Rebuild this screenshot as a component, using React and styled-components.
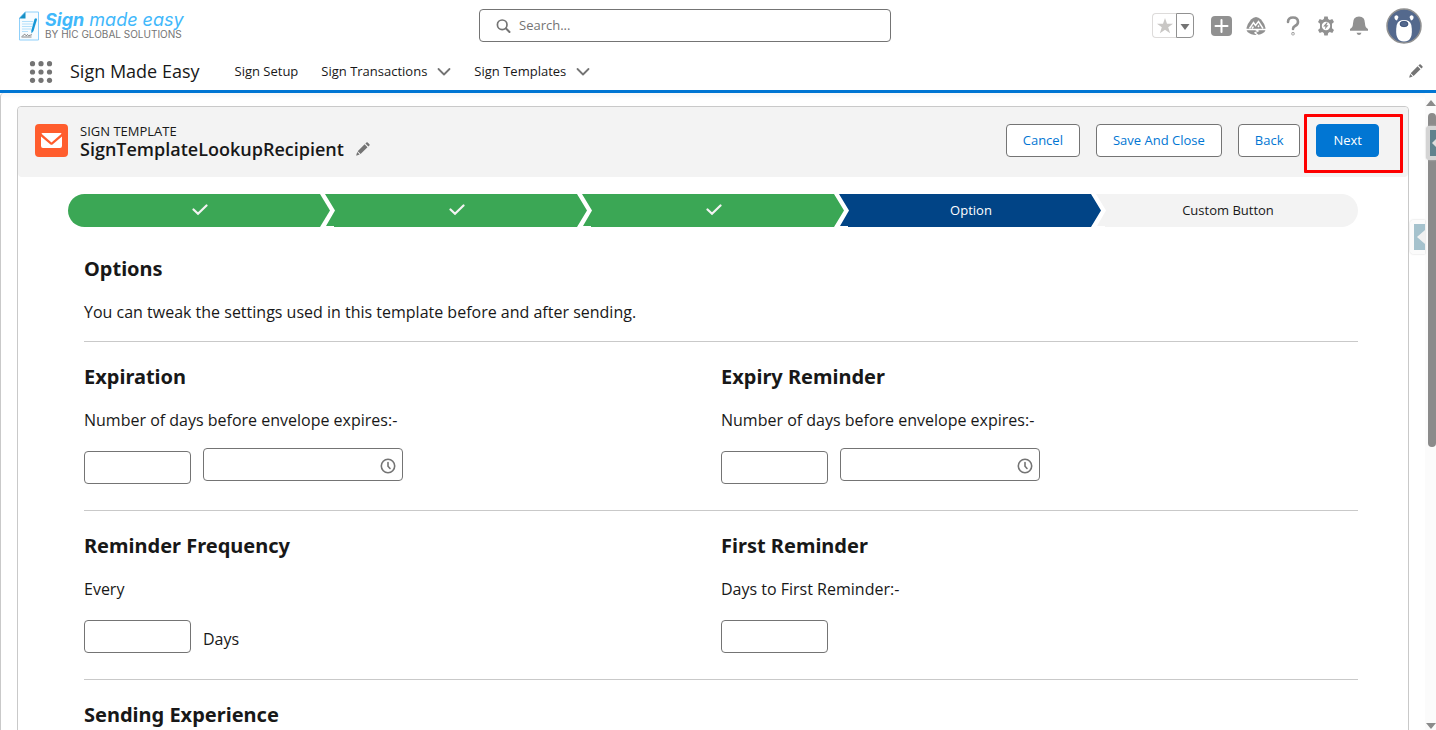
import React from 'react';
import styled, { createGlobalStyle } from 'styled-components';

const GlobalStyle = createGlobalStyle`
  *, *::before, *::after { box-sizing: border-box; }
  body {
    margin: 0;
    overflow: hidden;
    background: #fff;
    color: #181818;
    font-family: 'Open Sans', 'Segoe UI', sans-serif;
    font-size: 13px;
  }
  h1, h2, p { margin: 0; }
  button, input { font: inherit; }
`;

const Shell = styled.div`
  display: flex;
  flex-direction: column;
  height: 100vh;
`;

const GlobalHeader = styled.header`
  flex: none;
  display: grid;
  grid-template-columns: 461fr 412fr 531fr;
  align-items: center;
  height: 51px;
  padding: 0 14px 0 18px;
`;

const Brand = styled.a`
  display: flex;
  align-items: center;
  gap: 5px;
  color: #747474;
  text-decoration: none;
`;

const BrandText = styled.span`
  display: flex;
  flex-direction: column;
  font-family: Inter, sans-serif;
`;

const BrandName = styled.span`
  color: #41b8fb;
  font-size: 18px;
  line-height: 18px;
  font-style: italic;
  b { font-weight: 700; }
`;

const BrandTag = styled.span`
  font-size: 10px;
  line-height: 11px;
`;

const SearchBox = styled.label`
  display: flex;
  align-items: center;
  gap: 8px;
  height: 33px;
  padding: 0 16px;
  border: 1px solid #747474;
  border-radius: 4px;
  color: #747474;
  input {
    flex: 1;
    min-width: 0;
    padding: 0 0 2px;
    border: 0;
    outline: 0;
    background: none;
    line-height: 20px;
  }
  input::placeholder { color: #747474; opacity: 1; }
`;

const Actions = styled.div`
  display: flex;
  align-items: center;
  justify-content: flex-end;
  color: #919191;
`;

const FavoriteGroup = styled.div`
  display: flex;
  margin-right: 16px;
`;

const FavoriteButton = styled.button`
  display: grid;
  place-items: center;
  width: ${(p) => (p.$menu ? 18 : 24)}px;
  height: 25px;
  padding: 0;
  background: #fff;
  border: 1px solid ${(p) => (p.$menu ? '#919191' : '#dddbda')};
  border-right-width: ${(p) => (p.$menu ? 1 : 0)}px;
  border-radius: ${(p) => (p.$menu ? '0 4px 4px 0' : '4px 0 0 4px')};
  color: ${(p) => (p.$menu ? '#919191' : '#c9c7c5')};
`;

const IconButton = styled.button`
  display: grid;
  place-items: center;
  width: ${(p) => p.$width || 22}px;
  height: 20px;
  margin-right: ${(p) => p.$gap || 0}px;
  padding: 0;
  border: 0;
  background: none;
  color: inherit;
`;

const Avatar = styled.button`
  width: 36px;
  height: 36px;
  padding: 0;
  border: 0;
  border-radius: 50%;
  background: none;
  svg { display: block; }
`;

const NavBar = styled.nav`
  flex: none;
  display: flex;
  align-items: center;
  height: 42px;
  padding: 0 12px 0 29px;
  border-bottom: 3px solid #0176d3;
`;

const AppName = styled.span`
  margin: 0 35px 0 17px;
  font-size: 18px;
  line-height: 24px;
`;

const Tab = styled.div`
  display: flex;
  align-items: center;
  gap: 10px;
  margin-right: 23px;
  a {
    color: inherit;
    line-height: 20px;
    text-decoration: none;
  }
`;

const Spacer = styled.span`
  flex: 1;
`;

const Workspace = styled.div`
  position: relative;
  flex: 1;
  min-height: 0;
  display: flex;
  overflow: hidden;
  background: linear-gradient(#f7f7f7, #fff 6px);
  border-left: 1px solid #c9c9c9;
  border-top-left-radius: 4px;
`;

const Content = styled.main`
  flex: 1;
  min-width: 0;
  padding: 13px 16px 0;
`;

const Card = styled.section`
  padding-bottom: 40px;
  border: 1px solid #c9c9c9;
  border-radius: 4px;
`;

const PageHeader = styled.header`
  display: flex;
  align-items: flex-start;
  height: 70px;
  padding: 17px 29px 0 17px;
  background: #f3f3f3;
  border-radius: 4px;
`;

const ObjectIcon = styled.span`
  display: grid;
  place-items: center;
  width: 33px;
  height: 33px;
  margin-right: 12px;
  border-radius: 4px;
  background: #ff5d2d;
`;

const Titles = styled.div`
  p { font-size: 13px; line-height: 14px; }
  h1 { font-size: 18px; line-height: 22px; font-weight: 600; }
`;

const TitleRow = styled.div`
  display: flex;
  align-items: center;
  gap: 8px;
`;

const ButtonRow = styled.div`
  display: flex;
  gap: 16px;
  margin-left: auto;
`;

const Button = styled.button`
  height: 33px;
  padding: 0 16px 2px;
  border: 1px solid ${(p) => (p.$brand ? '#0176d3' : '#747474')};
  border-radius: 4px;
  background: ${(p) => (p.$brand ? '#0176d3' : '#fff')};
  color: ${(p) => (p.$brand ? '#fff' : '#0176d3')};
  line-height: 20px;
  white-space: nowrap;
`;

const Highlighted = styled.span`
  position: relative;
  display: flex;
  &::after {
    content: '';
    position: absolute;
    inset: -10px -24px -16px -12px;
    border: 3px solid #fe0000;
    border-radius: 1px;
    pointer-events: none;
  }
`;

const Path = styled.ol`
  display: flex;
  margin: 17px 50px 0;
  padding: 0;
  list-style: none;
  border-radius: 17px;
  overflow: hidden;
`;

const stepColors = { done: '#3ba755', current: '#014486', next: '#f3f3f3' };

const point = 'calc(100% - 10px) 0, 100% 50%, calc(100% - 10px) 100%';
const notch = '9px 100%, 9px calc(100% - 1px), 1px calc(100% - 1px), 10px 50%';

const Step = styled.li`
  flex: 1;
  display: grid;
  place-items: center;
  height: 33px;
  padding: 0 0 2px 2px;
  background: ${(p) => stepColors[p.$state]};
  color: ${(p) => (p.$state === 'next' ? '#181818' : '#fff')};
  clip-path: polygon(0 0, ${point}, ${notch});
  &:first-child { clip-path: polygon(0 0, ${point}, 0 100%); }
  &:last-child { clip-path: polygon(0 0, 100% 0, 100% 100%, ${notch}); }
  & + & { margin-left: -5px; }
`;

const Body = styled.div`
  margin: 0 50px 0 66px;
`;

const Row = styled.div`
  display: grid;
  grid-template-columns: 1fr 1fr;
  height: ${(p) => p.$height || 169}px;
  border-bottom: 1px solid #c9c9c9;
`;

const Field = styled.div`
  padding-top: ${(p) => p.$top || 20}px;
`;

const Heading = styled.h2`
  font-family: 'Noto Sans', 'Segoe UI', sans-serif;
  font-size: 20px;
  line-height: 30px;
  font-weight: 700;
`;

const Text = styled.p`
  margin-top: 16px;
  font-size: 16px;
  line-height: 24px;
`;

const Inputs = styled.div`
  display: flex;
  align-items: flex-start;
  gap: 12px;
  margin-top: 16px;
  font-size: 16px;
`;

const Unit = styled.span`
  line-height: 44px;
`;

const TextInput = styled.input`
  width: ${(p) => (p.$wide ? 200 : 107)}px;
  height: 33px;
  padding: 0 12px;
  border: 1px solid #747474;
  border-radius: 4px;
  background: #fff;
  margin-top: ${(p) => (p.$wide ? 0 : 3)}px;
`;

const TimeField = styled.label`
  position: relative;
  display: flex;
  svg {
    position: absolute;
    right: 7px;
    top: 10px;
  }
`;

const ScrollTrack = styled.div`
  flex: none;
  display: flex;
  flex-direction: column;
  align-items: center;
  width: 11px;
  padding: 7px 0 0;
  background: #fbfbfb;
`;

const ScrollThumb = styled.span`
  width: 8px;
  height: 53%;
  margin: 6px 0 auto;
  align-self: flex-end;
  border-radius: 4px;
  background: #8b8b8b;
`;

const SideHandle = styled.button`
  position: absolute;
  right: ${(p) => (p.$dark ? 0 : 11)}px;
  top: ${(p) => (p.$dark ? 33 : 127)}px;
  display: grid;
  place-items: center end;
  width: ${(p) => (p.$dark ? 10 : 15)}px;
  height: 34px;
  padding: 0;
  border: 4px solid ${(p) => (p.$dark ? '#d4d4d4' : '#fbfbfb')};
  border-right: 0;
  border-radius: 4px 0 0 4px;
  background: ${(p) => (p.$dark ? '#5f828d' : '#a5c2cd')};
  box-shadow: 0 0 2px #ccc;
`;

const Chevron = () => (
  <svg width="14" height="10" viewBox="0 0 14 10" fill="none" stroke="#747474" strokeWidth="1.800" strokeLinecap="round" strokeLinejoin="round" aria-hidden="true">
    <path d="M1.500 3 7 8.500 12.500 3" />
  </svg>
);

const Pencil = () => (
  <svg width="14" height="14" viewBox="0 0 14 14" fill="#747474" aria-hidden="true">
    <path d="m1.700 9.200 6.900-6.900 2.900 2.900-6.900 6.900zM9.400 1.500l1-1q.7-.6 1.300 0l1.700 1.700q.6.700 0 1.300l-1 1zM1.200 10l2.500 2.600-2.800 1q-.7.200-.6-.6z" />
  </svg>
);

const Launcher = () => (
  <svg width="24" height="22" viewBox="0 0 24 22" fill="#747474" aria-hidden="true">
    {[2.7, 11, 19.3].map((y) => [3.5, 12, 20.5].map((x) => <circle key={`${x}-${y}`} cx={x} cy={y} r="2.600" />))}
  </svg>
);

const Logo = () => (
  <svg width="22" height="30" viewBox="0 0 22 30" aria-hidden="true">
    <path d="M7 1h13.500v28H1.500V7z" fill="#f7fcff" stroke="#8fd0fa" />
    <path d="M1.200 7.500 7.500 1v6.500z" fill="#158fc6" />
    <path d="M4 10.500h11M4 13h11M4 15.500h10M4 18h9M4 20.500h6" stroke="#b4e0fb" />
    <path d="M16.500 8q2-1.500 2.500.5L15.500 20l-2 2.500-.2-3z" fill="#1597d7" />
    <path d="M4 25.500q3-3.500 3.500-1.500t2-.5l1 1.200 3.500-1M3.500 26h10" fill="none" stroke="#6a6a6a" strokeWidth=".8" />
  </svg>
);

const SearchIcon = () => (
  <svg width="15" height="15" viewBox="0 0 15 15" fill="none" stroke="#747474" aria-hidden="true">
    <circle cx="6.200" cy="6.800" r="4.800" strokeWidth="1.700" />
    <path d="m10 10.500 3.500 3.500" strokeWidth="2" strokeLinecap="round" />
  </svg>
);

const Clock = () => (
  <svg width="16" height="16" viewBox="0 0 16 16" fill="none" stroke="#747474" aria-hidden="true">
    <circle cx="8" cy="8" r="6.700" strokeWidth="1.600" />
    <path d="M8 4.500v3.800l2 2.200" strokeWidth="1.600" strokeLinecap="round" />
  </svg>
);

const Check = () => (
  <svg width="16" height="12" viewBox="0 0 16 12" fill="none" stroke="#f3f3f3" strokeWidth="2.200" strokeLinecap="round" aria-label="Completed">
    <path d="m1.500 5.500 4.500 4.300L14.500 1.500" />
  </svg>
);

const Arrow = ({ down }) => (
  <svg width="10" height="7" viewBox="0 0 10 7" fill="#8b8b8b" aria-hidden="true">
    <path d={down ? 'M0 0h10L5 6z' : 'M0 6h10L5 0z'} />
  </svg>
);

const steps = [
  { name: 'Template', state: 'done' },
  { name: 'Recipients', state: 'done' },
  { name: 'Fields', state: 'done' },
  { name: 'Option', state: 'current' },
  { name: 'Custom Button', state: 'next' },
];

function TopBar() {
  return (
    <GlobalHeader>
      <Brand href="#">
        <Logo />
        <BrandText>
          <BrandName><b>Sign</b> made easy</BrandName>
          <BrandTag>BY HIC GLOBAL SOLUTIONS</BrandTag>
        </BrandText>
      </Brand>
      <SearchBox>
        <SearchIcon />
        <input type="search" placeholder="Search..." aria-label="Search" />
      </SearchBox>
      <Actions>
        <FavoriteGroup>
          <FavoriteButton aria-label="Favorite">
            <svg width="16" height="16" viewBox="0 0 16 16" fill="currentColor"><path d="m8 0 2 5.700h6l-4.800 3.600 1.900 6L8 11.700l-5.100 3.600 1.900-6L0 5.700h6z" /></svg>
          </FavoriteButton>
          <FavoriteButton $menu aria-label="Favorites list">
            <svg width="10" height="8" viewBox="0 0 10 8" fill="#747474"><path d="M.5 2h9L5 8z" /></svg>
          </FavoriteButton>
        </FavoriteGroup>
        <IconButton $gap={13} aria-label="Add">
          <svg width="21" height="20" viewBox="0 0 21 20"><rect width="21" height="20" rx="4" fill="currentColor" /><path d="M10.500 4v12M4.500 10h12" stroke="#fff" strokeWidth="2" strokeLinecap="round" /></svg>
        </IconButton>
        <IconButton $gap={15} aria-label="Guidance">
          <svg width="20" height="20" viewBox="0 0 20 20">
            <path d="M10 1q2.500 0 5 2.500 3.500 4 4.500 8.500.5 2.500-1 4-3.500 3-8.500 3T1.500 16q-1.500-1.500-1-4Q1.500 7.500 5 3.500 7.500 1 10 1z" fill="currentColor" />
            <path d="m3.500 12.500 4-6 2 3L12.500 5.500l4.500 7M6 12.500l1.500-2M12 11l1-1.500" fill="none" stroke="#fff" strokeWidth="1.400" />
            <path d="M0 13.500h20M9 13.500l3 1.500-3 1.800 3 2.500" fill="none" stroke="#fff" strokeWidth="1.300" />
          </svg>
        </IconButton>
        <IconButton $gap={11} aria-label="Help">
          <svg width="14" height="20" viewBox="0 0 14 20" fill="none" stroke="currentColor" strokeWidth="2.600" strokeLinecap="round"><path d="M2 6q0-4.500 5-4.500T12 6q0 2.600-3 4-2 1-2 3" /><circle cx="7" cy="17.800" r=".4" /></svg>
        </IconButton>
        <IconButton $gap={11} aria-label="Setup">
          <svg width="20" height="20" viewBox="0 0 20 20" fill="currentColor">
            <path fillRule="evenodd" d="M8.300.500h3.400l.5 2.600 1.600.9 2.500-.9L18 6l-2 1.800v4.400L18 14l-1.700 2.900-2.500-.9-1.600.9-.5 2.600H8.300l-.5-2.600-1.600-.9-2.500.9L2 14l2-1.800V7.800L2 6l1.700-2.900 2.500.9 1.600-.9zM10 5.800a4.200 4.200 0 1 0 0 8.400 4.200 4.200 0 0 0 0-8.400z" />
            <path d="M10.600 6.500 7.200 10.600h2.300l-.7 3 3.700-4.300h-2.200l1.500-2.800z" />
          </svg>
        </IconButton>
        <IconButton $gap={16} aria-label="Notifications">
          <svg width="20" height="20" viewBox="0 0 20 20" fill="currentColor"><path d="M10 .5q6 0 6 7 0 4 3 5.500v1.800H1V13q3-1.500 3-5.500 0-7 6-7zM7.500 16.800h5q-.7 2.200-2.500 2.200t-2.500-2.200z" /></svg>
        </IconButton>
        <Avatar aria-label="View profile">
          <svg width="36" height="36" viewBox="0 0 36 36">
            <circle cx="18" cy="18" r="17" fill="#54698d" stroke="#919191" strokeWidth="1.500" />
            <path d="M8.500 8.500q2.500-2.500 4 .5l-1.500 3.500q-3-1-2.500-4zM27.500 8.500q-2.500-2.500-4 .5l1.500 3.500q3-1 2.500-4z" fill="#fff" />
            <path d="M18 12q6 0 7.300 5Q28 33.500 18 33.500T10.700 17Q12 12 18 12z" fill="#fff" />
            <ellipse cx="18" cy="16" rx="4" ry="2.700" fill="#54698d" stroke="#2c4570" strokeWidth=".8" />
          </svg>
        </Avatar>
      </Actions>
    </GlobalHeader>
  );
}

function Navigation() {
  return (
    <NavBar>
      <IconButton $width={24} aria-label="App Launcher"><Launcher /></IconButton>
      <AppName>Sign Made Easy</AppName>
      <Tab><a href="#setup">Sign Setup</a></Tab>
      <Tab><a href="#transactions">Sign Transactions</a><IconButton $width={14} aria-label="Transactions menu"><Chevron /></IconButton></Tab>
      <Tab><a href="#templates">Sign Templates</a><IconButton $width={14} aria-label="Templates menu"><Chevron /></IconButton></Tab>
      <Spacer />
      <IconButton $width={16} aria-label="Edit navigation"><Pencil /></IconButton>
    </NavBar>
  );
}

function DurationField({ title, label, time, unit }) {
  return (
    <Field>
      <Heading>{title}</Heading>
      <Text>{label}</Text>
      <Inputs>
        <TextInput aria-label={label} />
        {time && <TimeField><TextInput $wide aria-label={`${title} time`} /><Clock /></TimeField>}
        {unit && <Unit>{unit}</Unit>}
      </Inputs>
    </Field>
  );
}

export default function App() {
  return (
    <Shell>
      <GlobalStyle />
      <TopBar />
      <Navigation />
      <Workspace>
        <Content>
          <Card>
            <PageHeader>
              <ObjectIcon>
                <svg width="21" height="15" viewBox="0 0 21 15" fill="#fff" aria-hidden="true">
                  <path d="M1.500 0h18q.8 0 1 .8L10.500 9.500.5.8q.2-.8 1-.8z" /><path d="M0 3.500 9.500 11.500q1 .7 2 0L21 3.500V13q0 2-2 2H2q-2 0-2-2z" />
                </svg>
              </ObjectIcon>
              <Titles>
                <p>SIGN TEMPLATE</p>
                <TitleRow><h1>SignTemplateLookupRecipient</h1><IconButton aria-label="Edit name"><Pencil /></IconButton></TitleRow>
              </Titles>
              <ButtonRow>
                <Button>Cancel</Button>
                <Button>Save And Close</Button>
                <Button>Back</Button>
                <Highlighted><Button $brand>Next</Button></Highlighted>
              </ButtonRow>
            </PageHeader>
            <Path>
              {steps.map((s) => <Step key={s.name} $state={s.state}>{s.state === 'done' ? <Check /> : s.name}</Step>)}
            </Path>
            <Body>
              <Row $height={115}>
                <Field $top={27}>
                  <Heading>Options</Heading>
                  <Text>You can tweak the settings used in this template before and after sending.</Text>
                </Field>
              </Row>
              <Row>
                <DurationField title="Expiration" label="Number of days before envelope expires:-" time />
                <DurationField title="Expiry Reminder" label="Number of days before envelope expires:-" time />
              </Row>
              <Row>
                <DurationField title="Reminder Frequency" label="Every" unit="Days" />
                <DurationField title="First Reminder" label="Days to First Reminder:-" />
              </Row>
              <Field><Heading>Sending Experience</Heading></Field>
            </Body>
          </Card>
        </Content>
        <ScrollTrack aria-hidden="true"><Arrow /><ScrollThumb /><Arrow down /></ScrollTrack>
        <SideHandle aria-label="Open side panel"><svg width="9" height="18" viewBox="0 0 9 18"><path d="M9 2v14L1 9z" fill="#f1f1f1" /></svg></SideHandle>
        <SideHandle $dark aria-label="Open utility panel"><svg width="4" height="8" viewBox="0 0 4 8"><path d="M4 0v8L0 4z" fill="#ddd" /></svg></SideHandle>
      </Workspace>
    </Shell>
  );
}
